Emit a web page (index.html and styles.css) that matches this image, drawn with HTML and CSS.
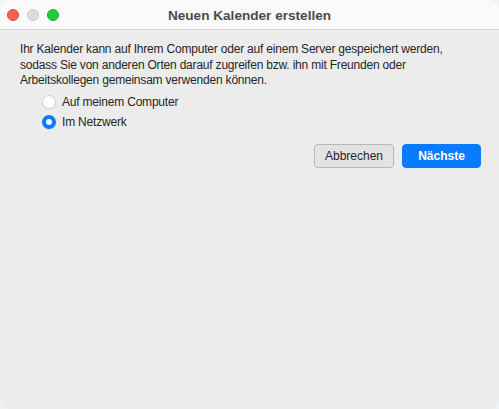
FILE: index.html
```html
<!DOCTYPE html>
<html lang="de">
<head>
  <meta charset="UTF-8" />
  <title>Neuen Kalender erstellen</title>
  <link rel="stylesheet" href="styles.css">
</head>
<body>
  <div class="window">
    <div class="titlebar">
      <div class="lights">
        <span class="light close"></span>
        <span class="light min"></span>
        <span class="light zoom"></span>
      </div>
      <div class="title">Neuen Kalender erstellen</div>
    </div>
    <div class="content">
      <p class="intro">Ihr Kalender kann auf Ihrem Computer oder auf einem Server gespeichert werden, sodass Sie von anderen Orten darauf zugreifen bzw. ihn mit Freunden oder Arbeitskollegen gemeinsam verwenden können.</p>
      <div class="options">
        <label class="option">
          <span class="radio"></span>
          <span>Auf meinem Computer</span>
        </label>
        <label class="option">
          <span class="radio checked"></span>
          <span>Im Netzwerk</span>
        </label>
      </div>
      <div class="actions">
        <button class="btn">Abbrechen</button>
        <button class="btn primary">Nächste</button>
      </div>
    </div>
  </div>
</body>
</html>
```

FILE: styles.css
```css
* {
  box-sizing: border-box;
}

html, body {
  margin: 0;
  padding: 0;
  height: 100%;
}

body {
  background: #eef2f7;
  font-family: "Liberation Sans", Arial, sans-serif;
  color: #262626;
}

.window {
  width: 499px;
  height: 409px;
  background: #ececec;
  border-radius: 10px;
  overflow: hidden;
}

.titlebar {
  position: relative;
  height: 30px;
  background: #fafafa;
  border-bottom: 1px solid #d6d6d6;
  display: flex;
  align-items: center;
  justify-content: center;
}

.lights {
  position: absolute;
  left: 7px;
  top: 9px;
  display: flex;
  gap: 8px;
}

.light {
  width: 12px;
  height: 12px;
  border-radius: 50%;
}

.close {
  background: #fe5f57;
  border: 1px solid #e2463f;
}

.min {
  background: #dcdcdc;
  border: 1px solid #cbcbcb;
}

.zoom {
  background: #28c840;
  border: 1px solid #1aab29;
}

.title {
  font-size: 13.6px;
  font-weight: 700;
  color: #4a4a4a;
  margin-top: 1px;
}

.content {
  padding: 12px 20px 0 20px;
}

.intro {
  margin: 0;
  font-size: 12px;
  line-height: 15.5px;
  letter-spacing: -0.2px;
  color: #262626;
}

.options {
  margin: 6px 0 0 22px;
  display: flex;
  flex-direction: column;
  gap: 6px;
}

.option {
  display: flex;
  align-items: center;
  gap: 6px;
  font-size: 12px;
  letter-spacing: -0.2px;
  height: 14px;
}

.radio {
  width: 14px;
  height: 14px;
  border-radius: 50%;
  background: #fff;
  border: 1px solid #d4d4d4;
  box-shadow: 0 1px 1px rgba(0, 0, 0, 0.06);
}

.radio.checked {
  background: #fff;
  border: 4px solid #0a7aff;
}

.actions {
  display: flex;
  justify-content: flex-end;
  gap: 8px;
  margin-top: 15px;
  margin-right: -2px;
}

.btn {
  height: 24px;
  width: 80px;
  font-family: "Liberation Sans", Arial, sans-serif;
  font-size: 12px;
  color: #262626;
  background: #e3e3e3;
  border: 1px solid #b8b8b8;
  border-radius: 4px;
  padding: 0;
}

.btn.primary {
  width: 79px;
  background: #0a7aff;
  border-color: #0a7aff;
  color: #fff;
  font-weight: 700;
}
```
